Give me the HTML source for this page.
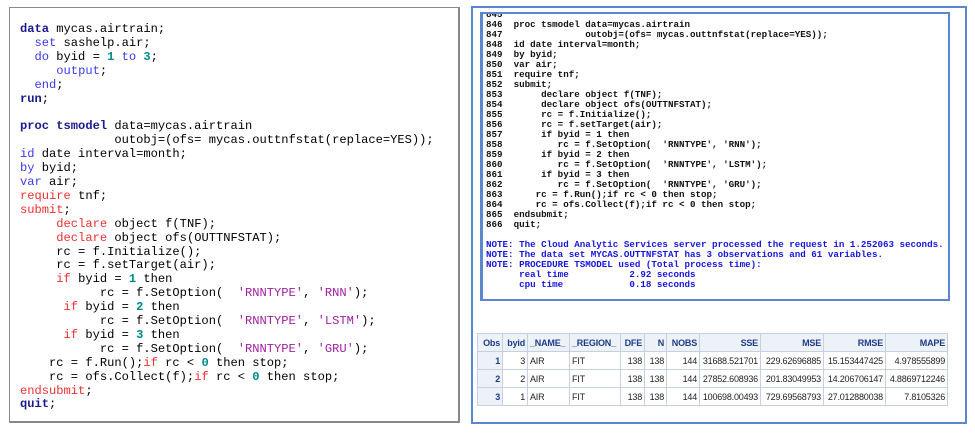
<!DOCTYPE html>
<html><head><meta charset="utf-8"><style>
body{margin:0;width:975px;height:441px;background:#fff;position:relative;overflow:hidden}
.l{position:absolute;left:9px;top:7px;width:451px;height:416px;border:1px solid #8a8a8a;border-right:2px solid #888;border-bottom:2px solid #888;box-sizing:border-box}
.code{position:absolute;left:10px;top:15px;font:12.1px/13.9px "Liberation Mono",monospace;color:#000;white-space:pre;margin:0}
.k{color:#1a1a8c;font-weight:bold}.b{color:#3a3af0}.r{color:#f03030}.t{color:#008a8a;font-weight:bold}.p{color:#a020a0}
.o{position:absolute;left:471px;top:6px;width:496px;height:418px;border:2px solid #5b86d0;box-sizing:border-box}
.in{position:absolute;left:480px;top:12px;width:470px;height:289px;border:2px solid #5b86d0;border-left:3px solid #5b86d0;box-sizing:border-box;overflow:hidden}
.log{position:absolute;left:3px;top:-4px;font:bold 9.2px/10px "Liberation Mono",monospace;color:#111;white-space:pre;margin:0;letter-spacing:0}
.n{color:#1515e0}
table{position:absolute;left:477px;top:333px;width:470px;table-layout:fixed;border-collapse:collapse;font:9px "Liberation Sans",Arial,sans-serif;background:#eef2f8;letter-spacing:-0.2px}
td,th{border:1px solid #c5d0e0;height:17px;padding:0 2px;text-align:right;white-space:nowrap;overflow:hidden}
th{color:#1d3c8a;font-weight:bold;background:#edf1f8}
td{background:#fff;color:#222}
td.h{background:#edf1f8;color:#1d3c8a;font-weight:bold}
td.lft,th.lft{text-align:left}
</style></head><body>
<div class="l"><pre class="code"><span class="k">data</span> mycas.airtrain;
  <span class="b">set</span> sashelp.air;
  <span class="b">do</span> byid = <span class="t">1</span> <span class="b">to</span> <span class="t">3</span>;
     <span class="b">output</span>;
  <span class="b">end</span>;
<span class="k">run</span>;

<span class="k">proc tsmodel</span> data=mycas.airtrain
             outobj=(ofs= mycas.outtnfstat(replace=YES));
<span class="b">id</span> date interval=month;
<span class="b">by</span> byid;
<span class="b">var</span> air;
<span class="r">require</span> tnf;
<span class="r">submit</span>;
     <span class="r">declare</span> object f(TNF);
     <span class="r">declare</span> object ofs(OUTTNFSTAT);
     rc = f.Initialize();
     rc = f.setTarget(air);
     <span class="r">if</span> byid = <span class="t">1</span> then
           rc = f.SetOption(  <span class="p">'RNNTYPE'</span>, <span class="p">'RNN'</span>);
      <span class="r">if</span> byid = <span class="t">2</span> then
           rc = f.SetOption(  <span class="p">'RNNTYPE'</span>, <span class="p">'LSTM'</span>);
      <span class="r">if</span> byid = <span class="t">3</span> then
           rc = f.SetOption(  <span class="p">'RNNTYPE'</span>, <span class="p">'GRU'</span>);
    rc = f.Run();<span class="r">if</span> rc &lt; <span class="t">0</span> then stop;
    rc = ofs.Collect(f);<span class="r">if</span> rc &lt; <span class="t">0</span> then stop;
<span class="r">endsubmit</span>;
<span class="k">quit</span>;</pre></div>
<div class="o"></div>
<div class="in"><pre class="log">845
846  proc tsmodel data=mycas.airtrain
847               outobj=(ofs= mycas.outtnfstat(replace=YES));
848  id date interval=month;
849  by byid;
850  var air;
851  require tnf;
852  submit;
853       declare object f(TNF);
854       declare object ofs(OUTTNFSTAT);
855       rc = f.Initialize();
856       rc = f.setTarget(air);
857       if byid = 1 then
858          rc = f.SetOption(  'RNNTYPE', 'RNN');
859       if byid = 2 then
860          rc = f.SetOption(  'RNNTYPE', 'LSTM');
861       if byid = 3 then
862          rc = f.SetOption(  'RNNTYPE', 'GRU');
863      rc = f.Run();if rc &lt; 0 then stop;
864      rc = ofs.Collect(f);if rc &lt; 0 then stop;
865  endsubmit;
866  quit;

<span class="n">NOTE: The Cloud Analytic Services server processed the request in 1.252063 seconds.
NOTE: The data set MYCAS.OUTTNFSTAT has 3 observations and 61 variables.
NOTE: PROCEDURE TSMODEL used (Total process time):
      real time           2.92 seconds
      cpu time            0.18 seconds</span></pre></div>
<table>
<colgroup><col style="width:25px"><col style="width:25px"><col style="width:42px"><col style="width:51px"><col style="width:24px"><col style="width:22px"><col style="width:33px"><col style="width:61px"><col style="width:63px"><col style="width:62px"><col style="width:62px"></colgroup>
<tr><th>Obs</th><th>byid</th><th class="lft">_NAME_</th><th class="lft">_REGION_</th><th>DFE</th><th>N</th><th>NOBS</th><th>SSE</th><th>MSE</th><th>RMSE</th><th>MAPE</th></tr>
<tr><td class="h">1</td><td>3</td><td class="lft">AIR</td><td class="lft">FIT</td><td>138</td><td>138</td><td>144</td><td>31688.521701</td><td>229.62696885</td><td>15.153447425</td><td>4.978555899</td></tr>
<tr><td class="h">2</td><td>2</td><td class="lft">AIR</td><td class="lft">FIT</td><td>138</td><td>138</td><td>144</td><td>27852.608936</td><td>201.83049953</td><td>14.206706147</td><td>4.8869712246</td></tr>
<tr><td class="h">3</td><td>1</td><td class="lft">AIR</td><td class="lft">FIT</td><td>138</td><td>138</td><td>144</td><td>100698.00493</td><td>729.69568793</td><td>27.012880038</td><td>7.8105326</td></tr>
</table>
</body></html>
